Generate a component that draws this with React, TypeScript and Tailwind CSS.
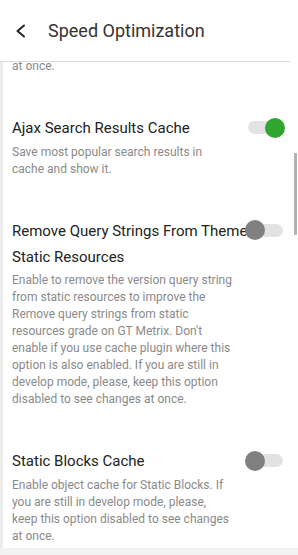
const Toggle = ({ on }: { on: boolean }) => (
  <div className="absolute left-[236px] top-[6px] h-[13px] w-[35px] rounded-full bg-[#e2e2e2]">
    {on ? (
      <div className="absolute right-[-2px] top-1/2 h-[20px] w-[20px] -translate-y-1/2 rounded-full bg-[#30a530]" />
    ) : (
      <div className="absolute left-[-3px] top-1/2 h-[20px] w-[20px] -translate-y-1/2 rounded-full bg-[#808080]" />
    )}
  </div>
);

const Setting = ({
  title,
  text,
  on,
}: {
  title: string;
  text: string;
  on: boolean;
}) => (
  <div className="pt-[40px]">
    <div className="relative">
      <div className="pr-[10px] text-[15px] leading-[26px] text-[#222]">{title}</div>
      <Toggle on={on} />
    </div>
    <p className="mt-[2.5px] w-[222px] text-[12px] leading-[17px] text-[#8a8a8a]">{text}</p>
  </div>
);

export default function App() {
  return (
    <div className="flex h-[555px] w-[298px] flex-col overflow-hidden bg-white font-['Roboto',sans-serif]">
      <div className="flex h-[62px] w-[290px] shrink-0 items-center border-b border-[#dadada] pl-[16px]">
        <svg width="10" height="14" viewBox="0 0 10 14" className="mt-[1px]">
          <polyline
            points="8,1.5 1.5,7 8,12.5"
            fill="none"
            stroke="#222"
            strokeWidth="2"
            strokeLinecap="round"
            strokeLinejoin="round"
          />
        </svg>
        <span className="ml-[22px] text-[18px] text-[#333]">Speed Optimization</span>
      </div>
      <div className="flex min-h-0 flex-1">
        <div className="w-[290px] overflow-hidden border-l-[3px] border-[#ececec] px-[9px]">
          <p className="-mt-[4px] text-[12px] leading-[17px] text-[#8a8a8a]">at once.</p>
          <Setting
            title="Ajax Search Results Cache"
            text="Save most popular search results in cache and show it."
            on
          />
          <Setting
            title="Remove Query Strings From Theme Static Resources"
            text="Enable to remove the version query string from static resources to improve the Remove query strings from static resources grade on GT Metrix. Don't enable if you use cache plugin where this option is also enabled. If you are still in develop mode, please, keep this option disabled to see changes at once."
            on={false}
          />
          <Setting
            title="Static Blocks Cache"
            text="Enable object cache for Static Blocks. If you are still in develop mode, please, keep this option disabled to see changes at once."
            on={false}
          />
        </div>
        <div className="w-[8px] pl-[4px] pt-[91px]">
          <div className="h-[82px] w-[3px] bg-[#b3b3b3]" />
        </div>
      </div>
      <div className="h-[7px] shrink-0 bg-[#f1f1f1]" />
    </div>
  );
}
